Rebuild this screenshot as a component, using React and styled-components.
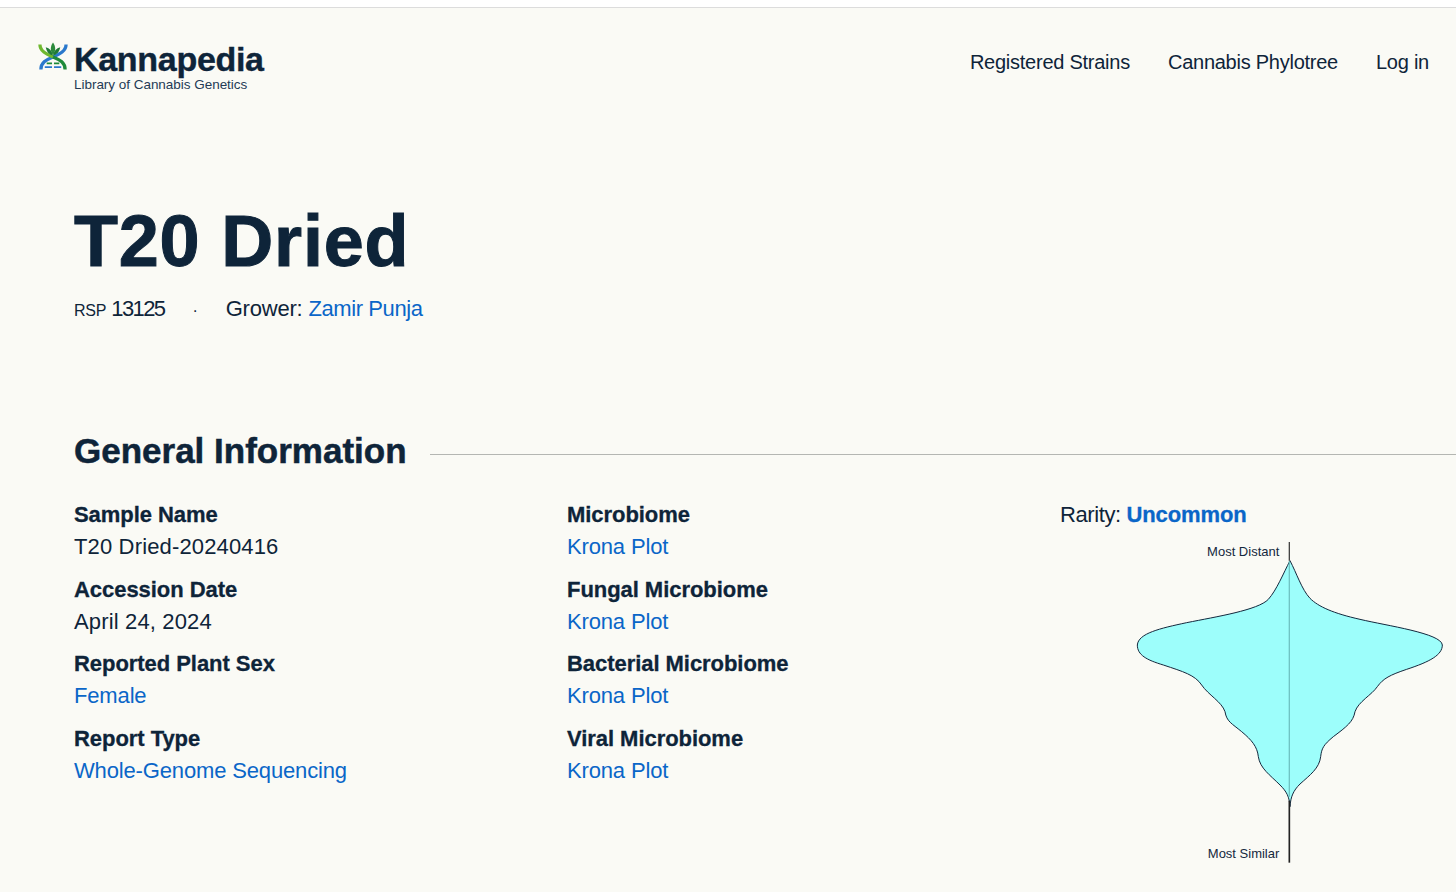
import React from 'react';
import styled, { createGlobalStyle } from 'styled-components';

const Global = createGlobalStyle`
  html, body { margin: 0; padding: 0; background: #fff; }
  body { font-family: "Liberation Sans", Arial, sans-serif; color: #0e2439; overflow: hidden; }
`;
const Page = styled.div`
  margin-top: 7px; height: 885px; background: #fafaf5; border-top: 1px solid #dcdcdc;
  box-sizing: border-box; overflow: hidden;
`;
const Header = styled.header`
  display: flex; justify-content: space-between; align-items: flex-start;
  padding: 33px 27px 0 37px;
`;
const Brand = styled.div`display: flex; flex-direction: column; position: relative; padding-left: 37px;`;
const LogoMark = styled.svg`position: absolute; left: 1px; top: 1px; width: 30px; height: 29px;`;
const BrandName = styled.div`
  font-size: 34px; line-height: 36px; font-weight: 700; letter-spacing: -0.3px; color: #0e2439;
  -webkit-text-stroke: 0.4px #0e2439;
`;
const BrandSub = styled.div`font-size: 13.5px; line-height: 16px; letter-spacing: -0.03px; color: #243b55;`;
const Nav = styled.nav`display: flex; gap: 38px; padding-top: 7px;`;
const NavLink = styled.span`font-size: 20px; line-height: 28px; letter-spacing: -0.25px; color: #0e2439;`;
const Main = styled.main`padding: 107px 0 0 74px;`;
const Title = styled.h1`
  margin: 0; font-size: 72px; line-height: 82px; font-weight: 700; letter-spacing: 0.8px; color: #0e2439;
  -webkit-text-stroke: 1px #0e2439;
`;
const Meta = styled.div`display: flex; align-items: baseline; margin-top: 13px; font-size: 22px; line-height: 28px; letter-spacing: -0.2px; color: #0e2439;`;
const Small = styled.span`font-size: 16px; margin-right: 5px;`;
const Accession = styled.span`letter-spacing: -1.6px;`;
const Dot = styled.span`margin: 0 28px 0 28px; font-size: 16px;`;
const A = styled.span`color: #0a66c8; letter-spacing: -0.4px;`;
const SectionHead = styled.div`display: flex; align-items: center; margin-top: 104px; gap: 23px;`;
const H2 = styled.h2`
  margin: 0; font-size: 35px; line-height: 44px; font-weight: 700; letter-spacing: 0; color: #0e2439; white-space: nowrap;
  -webkit-text-stroke: 0.5px #0e2439;
`;
const Rule = styled.div`flex: 1; height: 1px; background: #b4b6b2; margin-top: 6px;`;
const Columns = styled.div`display: grid; grid-template-columns: 493px 493px 396px; margin-top: 26px;`;
const Col = styled.div`display: flex; flex-direction: column; gap: 11px;`;
const Item = styled.div`display: flex; flex-direction: column;`;
const Label = styled.div`
  font-size: 22px; line-height: 32px; font-weight: 700; letter-spacing: -0.05px; color: #0e2439;
  -webkit-text-stroke: 0.3px #0e2439;
`;
const Value = styled.div`
  font-size: 22px; line-height: 31.5px; color: ${p => p.$link ? '#0a66c8' : '#0e2439'};
  letter-spacing: ${p => p.$link ? '-0.15px' : '0.15px'};
`;
const Rarity = styled.div`font-size: 22px; line-height: 32px; letter-spacing: -0.4px; color: #0e2439;`;
const RarityLink = styled.span`color: #0a66c8; font-weight: 700; letter-spacing: -0.1px; -webkit-text-stroke: 0.3px #0a66c8;`;
const Chart = styled.svg`display: block; width: 336px; height: 340px; margin: -1px 0 0 60px;`;

const left = [
  ['Sample Name', 'T20 Dried-20240416', false],
  ['Accession Date', 'April 24, 2024', false],
  ['Reported Plant Sex', 'Female', true],
  ['Report Type', 'Whole-Genome Sequencing', true],
];
const mid = [
  ['Microbiome', 'Krona Plot', true],
  ['Fungal Microbiome', 'Krona Plot', true],
  ['Bacterial Microbiome', 'Krona Plot', true],
  ['Viral Microbiome', 'Krona Plot', true],
];

const ItemList = ({ items }) => (
  <Col>
    {items.map(([l, v, link]) => (
      <Item key={l}>
        <Label>{l}</Label>
        <Value $link={link}>{v}</Value>
      </Item>
    ))}
  </Col>
);

const violin = `M510 92
C530 130 545 178 570 205 C595 230 640 250 720 268 C800 287 965 310 967 345
C967 375 930 395 860 418 C810 435 790 445 772 470 C755 495 715 515 705 545
C700 575 680 590 640 620 C610 645 605 655 602 680 C598 715 570 735 540 762
C520 782 512 800 510 830
C508 800 500 785 480 765 C450 735 420 715 415 680 C412 650 395 630 365 605
C335 580 320 575 315 545 C305 515 265 495 245 465 C225 435 190 425 130 405
C80 390 52 375 52 345 C55 310 120 295 200 278 C290 260 415 240 445 208
C470 180 490 130 510 92 Z`;

export default function App() {
  return (
    <>
      <Global />
      <Page>
        <Header>
          <Brand>
            <LogoMark viewBox="0 0 31 29" fill="none">
              <path d="M29 2 C29 9 22 12 15.5 15 C8 18 3 21 3 28" stroke="#2a78cc" strokeWidth="3.4" />
              <path d="M2 2 C2 9 9 12 15.5 15" stroke="#6fb82f" strokeWidth="3.4" />
              <path d="M15.5 15 C23 18 28 21 28 28" stroke="#1f8a3a" strokeWidth="3.4" />
              <path d="M15.5 0 C18.5 4 18.5 9 15.5 13 C12.5 9 12.5 4 15.5 0 Z" fill="#2c8a3c" />
              <path d="M8 5 C12 6 14.5 9 15.5 13.5 C11 12.5 9 9.5 8 5 Z M23 5 C19 6 16.5 9 15.5 13.5 C20 12.5 22 9.5 23 5 Z" fill="#1f7a35" />
              <path d="M9 21.5 H14.5 M16.5 21.5 H22" stroke="#1f8a3a" strokeWidth="1.8" />
              <path d="M7 25.5 H14.5 M16.5 25.5 H24" stroke="#2a78cc" strokeWidth="1.8" />
            </LogoMark>
            <BrandName>Kannapedia</BrandName>
            <BrandSub>Library of Cannabis Genetics</BrandSub>
          </Brand>
          <Nav>
            <NavLink>Registered Strains</NavLink>
            <NavLink>Cannabis Phylotree</NavLink>
            <NavLink>Log in</NavLink>
          </Nav>
        </Header>
        <Main>
          <Title>T20 Dried</Title>
          <Meta>
            <Small>RSP</Small><Accession>13125</Accession><Dot>·</Dot>Grower:&nbsp;<A>Zamir Punja</A>
          </Meta>
          <SectionHead>
            <H2>General Information</H2>
            <Rule />
          </SectionHead>
          <Columns>
            <ItemList items={left} />
            <ItemList items={mid} />
            <div>
              <Rarity>Rarity: <RarityLink>Uncommon</RarityLink></Rarity>
              <Chart viewBox="0 0 1008 1020">
                <path d={violin} fill="#9dfefb" stroke="#14283d" strokeWidth="3" />
                <line x1="508" y1="36" x2="508" y2="92" stroke="#444" strokeWidth="4" />
                <line x1="508" y1="94" x2="508" y2="800" stroke="#6fc4c4" strokeWidth="4" />
                <line x1="508" y1="812" x2="508" y2="998" stroke="#222" strokeWidth="5" />
                <text x="478" y="78" textAnchor="end" fontFamily="'Liberation Sans', sans-serif" fontSize="39" fill="#14283d">Most Distant</text>
                <text x="478" y="984" textAnchor="end" fontFamily="'Liberation Sans', sans-serif" fontSize="39" fill="#14283d">Most Similar</text>
              </Chart>
            </div>
          </Columns>
        </Main>
      </Page>
    </>
  );
}
